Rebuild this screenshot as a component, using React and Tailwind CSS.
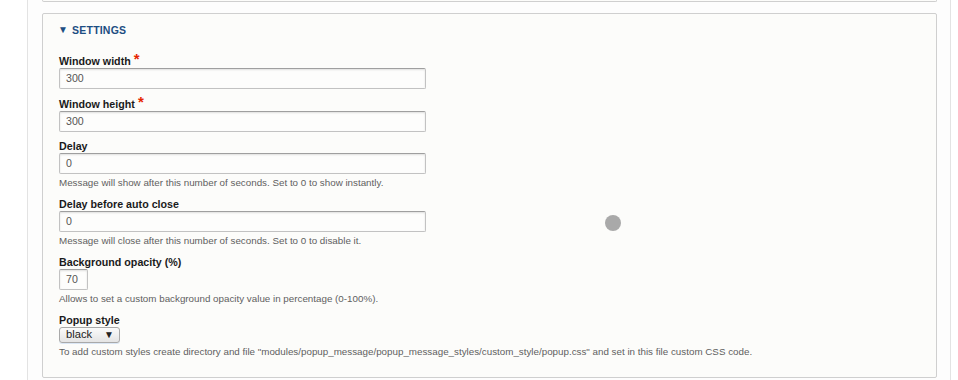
import React from "react";

const font = { fontFamily: '"Liberation Sans", Arial, sans-serif' };

function Label({ children, required }) {
  return (
    <div className="h-[14px] leading-[14px] text-[10.7px] font-bold text-[#1a1a1a] flex items-start">
      <span>{children}</span>
      {required && (
        <span className="ml-[3px] text-[#e62600] text-[15px] leading-[14px] font-bold -mt-[2px]">*</span>
      )}
    </div>
  );
}

function TextInput({ value, wide = true }) {
  return (
    <div
      className={`${wide ? "w-[367px]" : "w-[29px]"} h-[21px] border border-[#c2c2c2] border-t-[#9f9f9f] rounded-[2px] bg-[#fdfdfc] shadow-[inset_0_1px_2px_rgba(0,0,0,0.12)] flex items-center pl-[6px] text-[10.6px] text-[#555]`}
    >
      {value}
    </div>
  );
}

function Desc({ children }) {
  return (
    <div className="mt-[2px] h-[14px] leading-[14px] text-[9.8px] text-[#5f5f5f] whitespace-nowrap">
      {children}
    </div>
  );
}

export default function App() {
  return (
    <div className="relative w-[958px] h-[380px] bg-white overflow-hidden" style={font}>
      <div className="ml-[27px] w-[924px] h-[380px] border-l border-r border-[#e3e3e3] bg-[#fdfdfd] pl-[14px] pr-[13px]">
        <div className="h-[2px] border border-t-0 border-[#cfcfcf] rounded-b-[2px] bg-[#fcfcfa]" />
        <div className="mt-[11px] h-[365px] border border-[#cfcfcf] rounded-[2px] bg-[#fcfcfa] pl-[16px] pt-[9px]">
          <div className="-ml-[1px] h-[14px] leading-[14px] flex items-center text-[10.5px] font-bold text-[#1d4e82] tracking-[0.2px]">
            <span className="text-[10px] mr-[4px] leading-none">▼</span>
            <span>SETTINGS</span>
          </div>

          <div className="mt-[17px]">
            <Label required>Window width</Label>
            <TextInput value="300" />
          </div>

          <div className="mt-[8px]">
            <Label required>Window height</Label>
            <TextInput value="300" />
          </div>

          <div className="mt-[7px]">
            <Label>Delay</Label>
            <TextInput value="0" />
            <Desc>Message will show after this number of seconds. Set to 0 to show instantly.</Desc>
          </div>

          <div className="mt-[7px]">
            <Label>Delay before auto close</Label>
            <TextInput value="0" />
            <Desc>Message will close after this number of seconds. Set to 0 to disable it.</Desc>
          </div>

          <div className="mt-[7px]">
            <Label>Background opacity (%)</Label>
            <TextInput value="70" wide={false} />
            <Desc>Allows to set a custom background opacity value in percentage (0-100%).</Desc>
          </div>

          <div className="mt-[7px]">
            <Label>Popup style</Label>
            <div className="w-[61px] h-[16px] border border-[#a9a9a9] rounded-[3px] bg-gradient-to-b from-[#fbfbfb] to-[#e4e4e4] flex items-center pl-[6px] pr-[5px] text-[11.2px] text-[#222] shadow-[0_1px_0_#dbe7f5]">
              <span className="flex-1 leading-none">black</span>
              <span className="text-[10px] leading-none text-[#222]">▼</span>
            </div>
            <Desc>
              To add custom styles create directory and file "modules/popup_message/popup_message_styles/custom_style/popup.css" and set in this file custom CSS code.
            </Desc>
          </div>
        </div>
      </div>
      <div className="absolute left-[605px] top-[215px] w-[16px] h-[16px] rounded-full bg-[#a9a9a9]" />
    </div>
  );
}
